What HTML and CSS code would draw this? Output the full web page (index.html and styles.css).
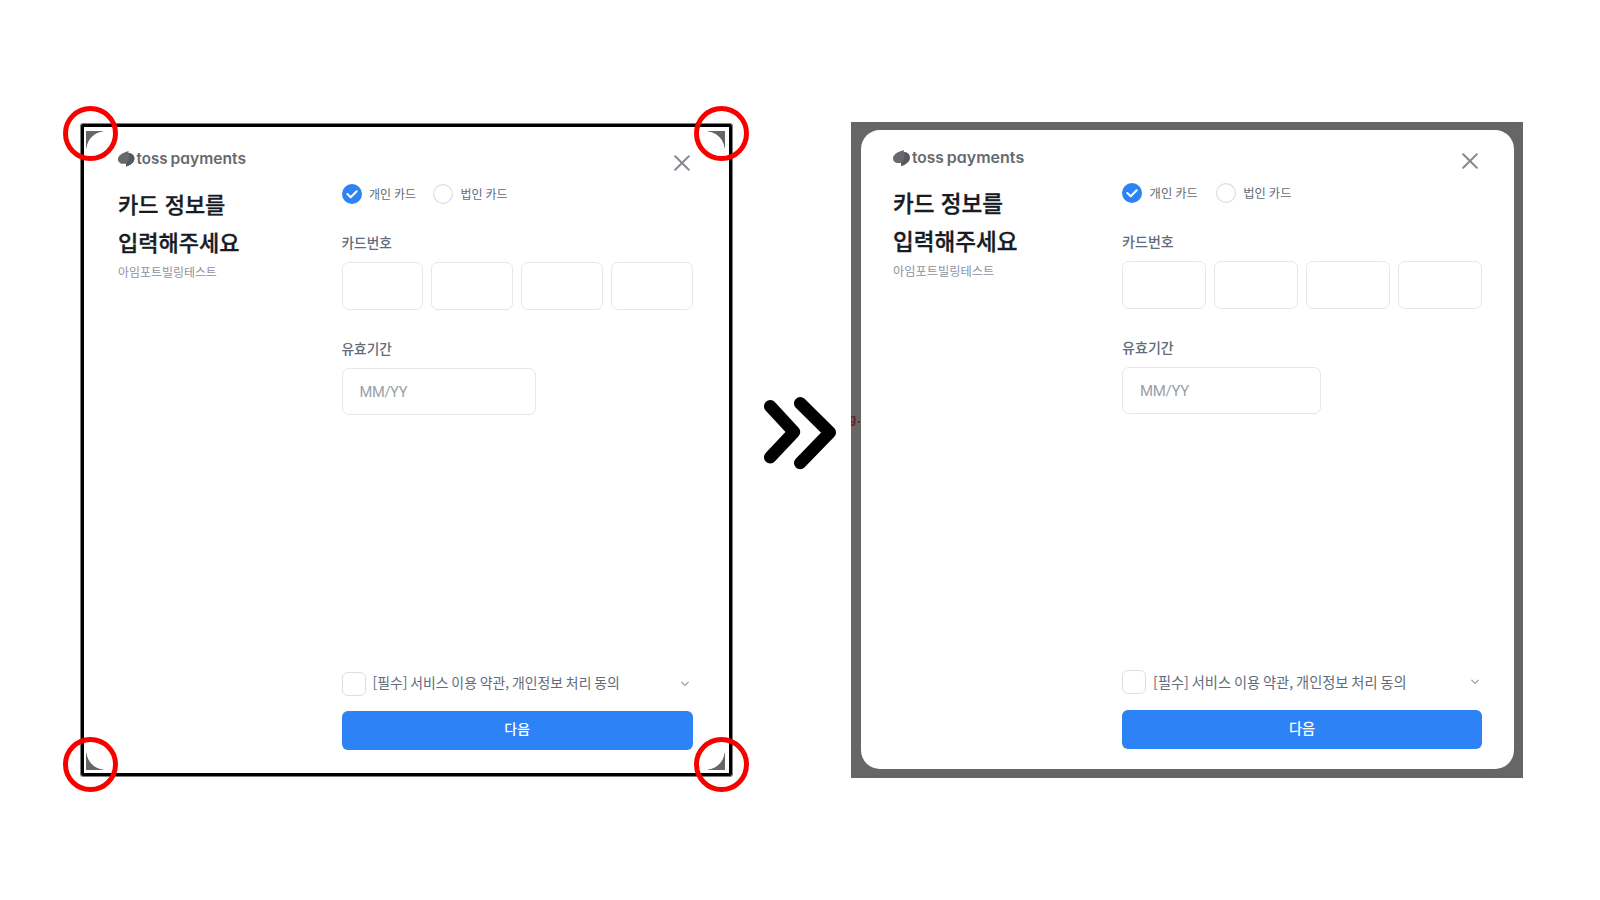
FILE: index.html
```html
<!DOCTYPE html>
<html lang="ko">
<head>
<meta charset="utf-8">
<title>toss payments</title>
<link rel="stylesheet" href="styles.css">
</head>
<body>
<main class="stage">
  <section class="panel before">
    <i class="corner tl"></i><i class="corner tr"></i><i class="corner bl"></i><i class="corner br"></i>
    <div class="dialog">
      <aside class="intro">
        <svg class="logo" viewBox="0 0 128 20"><path d="M10.500 0V2.300C14 2.300 16.400 4.300 16.400 7.300C16.400 11.500 12.500 14.300 8 15.600V12.800H5C2 12.800 0 10.800 0 8C0 4.500 5 1.600 10.500 0Z" fill="#66696d"/><path d="M10.500 2.300C14 2.300 16.400 4.300 16.400 7.300C16.400 11.500 12.500 14.300 8 15.600V12.800C11 10 12 6 10.500 2.300Z" fill="#56595c"/><text x="18.500" y="13" textLength="31" lengthAdjust="spacingAndGlyphs">toss</text><text x="52.500" y="13" textLength="75.500" lengthAdjust="spacingAndGlyphs">payments</text></svg>
        <h1 class="title">카드 정보를<br>입력해주세요</h1>
        <p class="merchant">아임포트빌링테스트</p>
      </aside>
      <form class="form">
        <svg class="close" viewBox="0 0 16 16"><path d="M1.200 1.200 14.800 14.800M14.800 1.200 1.200 14.800"/></svg>
        <div class="kinds">
          <svg class="radio" viewBox="0 0 20 20"><circle cx="10" cy="10" r="10" fill="#2d82f5"/><path class="tick" d="M5.300 10 8.700 13.200 14.700 7.200"/></svg><span class="kind">개인 카드</span>
          <svg class="radio second" viewBox="0 0 20 20"><circle class="ring" cx="10" cy="10" r="9.400"/></svg><span class="kind">법인 카드</span>
        </div>
        <div class="label">카드번호</div>
        <div class="numbers"><span class="field"></span><span class="field"></span><span class="field"></span><span class="field"></span></div>
        <div class="label">유효기간</div>
        <div class="field expiry">MM/YY</div>
        <div class="terms"><span class="check"></span><span class="agree">[필수] 서비스 이용 약관, 개인정보 처리 동의</span><svg class="more" viewBox="0 0 8 6"><path d="M.8 1.200 4 4.400 7.200 1.200"/></svg></div>
        <div class="next">다음</div>
      </form>
    </div>
    <i class="mark m1"></i><i class="mark m2"></i><i class="mark m3"></i><i class="mark m4"></i>
  </section>
  <svg class="arrows" viewBox="0 0 76 76"><path d="M8.200 12.300 32 38 8.200 63.300M38.200 9.300 67.800 38.500 38.200 69"/></svg>
  <section class="panel after">
    <span class="behind">g.</span>
    <div class="dialog">
      <aside class="intro">
        <svg class="logo" viewBox="0 0 128 20"><path d="M10.500 0V2.300C14 2.300 16.400 4.300 16.400 7.300C16.400 11.500 12.500 14.300 8 15.600V12.800H5C2 12.800 0 10.800 0 8C0 4.500 5 1.600 10.500 0Z" fill="#66696d"/><path d="M10.500 2.300C14 2.300 16.400 4.300 16.400 7.300C16.400 11.500 12.500 14.300 8 15.600V12.800C11 10 12 6 10.500 2.300Z" fill="#56595c"/><text x="18.500" y="13" textLength="31" lengthAdjust="spacingAndGlyphs">toss</text><text x="52.500" y="13" textLength="75.500" lengthAdjust="spacingAndGlyphs">payments</text></svg>
        <h1 class="title">카드 정보를<br>입력해주세요</h1>
        <p class="merchant">아임포트빌링테스트</p>
      </aside>
      <form class="form">
        <svg class="close" viewBox="0 0 16 16"><path d="M1.200 1.200 14.800 14.800M14.800 1.200 1.200 14.800"/></svg>
        <div class="kinds">
          <svg class="radio" viewBox="0 0 20 20"><circle cx="10" cy="10" r="10" fill="#2d82f5"/><path class="tick" d="M5.300 10 8.700 13.200 14.700 7.200"/></svg><span class="kind">개인 카드</span>
          <svg class="radio second" viewBox="0 0 20 20"><circle class="ring" cx="10" cy="10" r="9.400"/></svg><span class="kind">법인 카드</span>
        </div>
        <div class="label">카드번호</div>
        <div class="numbers"><span class="field"></span><span class="field"></span><span class="field"></span><span class="field"></span></div>
        <div class="label">유효기간</div>
        <div class="field expiry">MM/YY</div>
        <div class="terms"><span class="check"></span><span class="agree">[필수] 서비스 이용 약관, 개인정보 처리 동의</span><svg class="more" viewBox="0 0 8 6"><path d="M.8 1.200 4 4.400 7.200 1.200"/></svg></div>
        <div class="next">다음</div>
      </form>
    </div>
  </section>
</main>
</body>
</html>
```
FILE: styles.css
```css
* { box-sizing: border-box; }
body { margin: 0; background: #fff; font-family: "Noto Sans CJK KR", sans-serif; }
.stage { width: 1600px; height: 900px; display: flex; align-items: flex-start; padding: 122px 0 0 81px; overflow: hidden; }
.panel { position: relative; flex: none; --k: 1; }
.before { width: 651px; height: 652px; margin-top: 2px; border: 3px solid #000; border-radius: 2px; box-shadow: 0 0 0 1px rgba(0, 0, 0, .5); }
.after { --k: 1.025; width: 672px; height: 656px; margin-left: 13px; background: #666; padding: 7.500px 9px 9px 10px; }
.after .dialog { background: #fff; border-radius: 19px; height: 639.500px; }
.dialog { display: flex; height: 100%; }
.before .dialog { padding-left: 34px; }
.after .dialog { padding-left: 32px; }
.intro { flex: none; width: calc(223.500px * var(--k)); padding-top: 24px; }
.after .intro { padding-top: 20px; }
.logo { display: block; width: calc(128px * var(--k)); height: calc(20px * var(--k)); overflow: visible; }
.logo text { font: 600 15px Inter, sans-serif; font-feature-settings: "cv11"; fill: #66696e; }
.title { margin: 13px 0 0; font-size: calc(22px * var(--k)); line-height: 38px; font-weight: 500; color: #171c24; white-space: nowrap; -webkit-text-stroke: .35px #171c24; }
.after .title { margin-top: 13px; }
.merchant { margin: 3px 0 0; font-size: calc(11.950px * var(--k)); line-height: 18px; color: #8b93a0; white-space: nowrap; }
.form { position: relative; width: calc(351.300px * var(--k)); padding-top: 57px; color: #626b7a; }
.after .form { padding-top: 53px; }
.close { position: absolute; right: 3px; top: 27.500px; width: 16px; height: 16px; }
.after .close { right: 4px; top: 23.500px; }
.close path { fill: none; stroke: #858a94; stroke-width: 2; stroke-linecap: round; }
.kinds { display: flex; align-items: center; height: 20px; }
.radio { width: 20px; height: 20px; flex: none; }
.tick { fill: none; stroke: #fff; stroke-width: 2; stroke-linecap: round; stroke-linejoin: round; }
.ring { fill: #fff; stroke: #dcdee2; stroke-width: 1.200; }
.kind { margin-left: 7.500px; font-size: calc(12px * var(--k)); line-height: 20px; white-space: nowrap; word-spacing: -.5px; }
.second { margin-left: 17px; }
.after .second { margin-left: 18px; }
.label { font-size: calc(13.700px * var(--k)); line-height: 20px; margin-top: 28px; white-space: nowrap; font-weight: 500; }
.numbers { display: flex; justify-content: space-between; margin-top: 10px; }
.field { width: calc(81.700px * var(--k)); height: 48px; border: 1px solid #e6e7ea; border-radius: 7px; background: #fff; }
.expiry { width: calc(194px * var(--k)); height: 47px; margin-top: 10px; padding-left: 17px; font-family: Roboto, sans-serif; font-size: calc(14.600px * var(--k)); line-height: 46px; color: #9a9fa9; letter-spacing: -.3px; }
.terms { display: flex; align-items: center; height: 25px; margin-top: 256px; }
.check { width: 24px; height: 24px; border: 1.500px solid #dcdee2; border-radius: 6px; }
.agree { margin-left: 7px; font-size: calc(13.900px * var(--k)); line-height: 24px; white-space: nowrap; word-spacing: -1.100px; }
.before .agree { padding-bottom: 3px; }
.more { width: 8px; height: 6px; margin: 0 3.500px 0 auto; }
.more path { fill: none; stroke: #a2a7b0; stroke-width: 1.300; stroke-linecap: round; }
.next { margin-top: 15px; height: 39px; border-radius: 6px; background: #2d82f6; color: #fff; text-align: center; font-size: calc(13.900px * var(--k)); line-height: 35px; font-weight: 500; }
.mark { position: absolute; width: 55px; height: 55px; border: 5px solid #f80000; border-radius: 50%; }
.m1 { left: -21px; top: -21px; }
.m2 { right: -20px; top: -21px; }
.m3 { left: -21px; bottom: -18.500px; }
.m4 { right: -20px; bottom: -18.500px; }
.corner { position: absolute; width: 17px; height: 17px; }
.tl { left: 2px; top: 4px; background: radial-gradient(circle at 19px 19px, transparent 18.200px, #666 19px); }
.tr { right: 4px; top: 4px; background: radial-gradient(circle at -2px 19px, transparent 18.200px, #666 19px); }
.bl { left: 2px; bottom: 3px; background: radial-gradient(circle at 19px -2px, transparent 18.200px, #666 19px); }
.br { right: 4px; bottom: 3px; background: radial-gradient(circle at -2px -2px, transparent 18.200px, #666 19px); }
.arrows { flex: none; width: 76px; height: 76px; margin: 272px 0 0 30px; }
.arrows path { fill: none; stroke: #000; stroke-width: 12.500; stroke-linecap: round; stroke-linejoin: round; }
.behind { position: absolute; left: -2px; top: 290px; width: 12px; overflow: hidden; clip-path: inset(0 0 0 2px); font: bold 12px/16px "Liberation Mono", monospace; letter-spacing: -1px; color: #641f24; white-space: nowrap; }
```
